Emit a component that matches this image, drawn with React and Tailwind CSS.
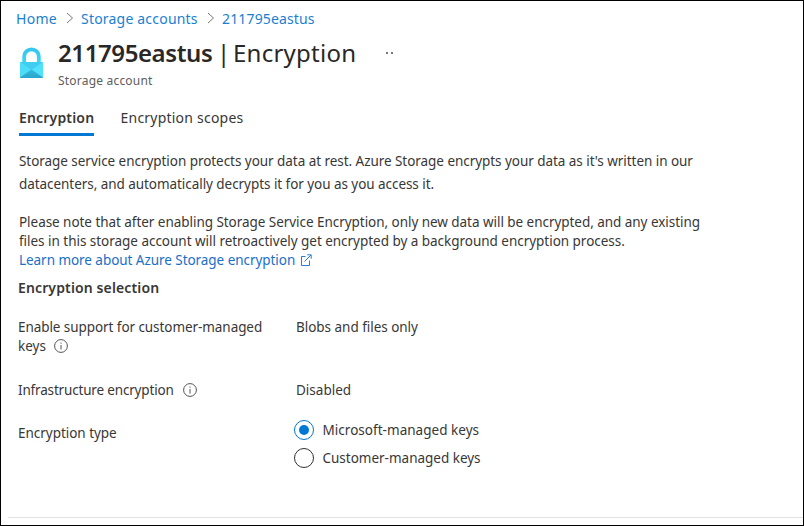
function Chevron() {
  return (
    <svg className="h-[12px] w-[8px] shrink-0" viewBox="0 0 8 12" fill="none" stroke="#777" strokeWidth="1">
      <path d="M1 1 L6.5 6 L1 11" />
    </svg>
  );
}

function InfoIcon() {
  return (
    <svg className="-mt-px h-[14px] w-[14px] shrink-0" viewBox="0 0 14 14" fill="none" stroke="#555" strokeWidth="1">
      <circle cx="7" cy="7" r="6.4" />
      <path d="M7 6 V10.5 M7 3.5 V4.7" />
    </svg>
  );
}

function LockIcon() {
  return (
    <svg className="h-[32px] w-[25px] shrink-0" viewBox="0 0 25 32">
      <defs>
        <linearGradient id="shackle" x1="0" y1="0" x2="0" y2="1">
          <stop offset="0" stopColor="#32c8ee" />
          <stop offset="1" stopColor="#3ed5fa" />
        </linearGradient>
        <linearGradient id="base" x1="0" y1="0" x2="0" y2="1">
          <stop offset="0" stopColor="#35b9dc" />
          <stop offset="1" stopColor="#2aa5cb" />
        </linearGradient>
      </defs>
      <path d="M5.2 16 V9.5 A7.3 7.2 0 0 1 19.8 9.5 V16" fill="none" stroke="url(#shackle)" strokeWidth="3.8" />
      <rect x="1" y="15" width="23" height="16" rx="0.8" fill="#50e2fc" />
      <path d="M1 15 H24 L12.5 23 Z" fill="#3fcdf0" />
      <path d="M1 15 L12.5 23 L1 31 Z" fill="#4adcf8" />
      <path d="M12.5 22.5 L24 30.5 Q24 31 23.3 31 H1.7 Q1 31 1 30.5 Z" fill="url(#base)" />
    </svg>
  );
}

function ExternalIcon() {
  return (
    <svg className="-mt-[2px] ml-[5px] h-[12px] w-[12px] shrink-0" viewBox="0 0 12 12" fill="none" stroke="#2b7bd6" strokeWidth="1">
      <path d="M5.5 2.5 H1.5 V11.5 H9.5 V6.5 M4.5 7.5 L11 1 M7.2 0.8 H11.2 V4.8" />
    </svg>
  );
}

function Radio({ checked, label, tracking }) {
  return (
    <div className="flex h-[20px] items-center">
      <span
        className={
          "flex h-[20px] w-[20px] items-center justify-center rounded-full border " +
          (checked ? "border-[#0078d4]" : "border-[#323130]")
        }
      >
        {checked && <span className="h-[10px] w-[10px] rounded-full bg-[#0078d4]" />}
      </span>
      <span className={"ml-[8.5px] leading-[20px] " + tracking}>{label}</span>
    </div>
  );
}

export default function App() {
  return (
    <div className="h-[526px] w-[804px] overflow-hidden whitespace-nowrap border border-black bg-white pt-[7px] font-['Noto_Sans',sans-serif] text-[13.5px] text-[#383736]">
      <nav className="flex h-[20px] items-center pl-[15px] text-[14px] text-[#1a7fd2]">
        <span className="w-[50px] tracking-[0.3px]">Home</span>
        <span className="flex w-[15px]"><Chevron /></span>
        <span className="w-[126px] tracking-[0.2px]">Storage accounts</span>
        <span className="flex w-[15px]"><Chevron /></span>
        <span className="tracking-[0.15px]">211795eastus</span>
      </nav>

      <header className="flex h-[68px] pl-[18px]">
        <div className="pt-[19px]"><LockIcon /></div>
        <div className="ml-[14px] pt-[8px]">
          <div className="flex h-[34px] items-center text-[24px] leading-[34px] text-[#292827]">
            <h1 className="w-[159px] font-semibold tracking-[-0.4px]">211795eastus</h1>
            <span className="w-[16px]">|</span>
            <span className="w-[153px] tracking-[0.25px]">Encryption</span>
            <span className="flex gap-[3px]">
              <i className="h-[2px] w-[2px] bg-[#777]" />
              <i className="h-[2px] w-[2px] bg-[#777]" />
            </span>
          </div>
          <div className="mt-[2px] h-[18px] text-[12px] leading-[18px] tracking-[0.2px] text-[#605e5c]">Storage account</div>
        </div>
      </header>

      <div className="mt-[12px] flex h-[28px] pl-[18px] text-[14px] leading-[20px]">
        <div className="w-[75px] border-b-3 border-[#0078d4] font-semibold tracking-[0.18px]">Encryption</div>
        <div className="ml-[26.5px] tracking-[0.22px]">Encryption scopes</div>
      </div>

      <div className="pl-[18px] pt-[14px]">
        <div className="leading-[23px]">
          <p className="tracking-[-0.048px]">Storage service encryption protects your data at rest. Azure Storage encrypts your data as it's written in our</p>
          <p className="tracking-[-0.055px]">datacenters, and automatically decrypts it for you as you access it.</p>
        </div>
        <div className="mt-[17px] leading-[19px]">
          <p className="tracking-[-0.045px]">Please note that after enabling Storage Service Encryption, only new data will be encrypted, and any existing</p>
          <p className="tracking-[-0.028px]">files in this storage account will retroactively get encrypted by a background encryption process.</p>
          <a className="flex items-center text-[#1a6fc9]">
            <span className="tracking-[-0.05px]">Learn more about Azure Storage encryption</span>
            <ExternalIcon />
          </a>
        </div>
      </div>

      <h2 className="mt-[8px] pl-[17px] text-[14px] font-semibold leading-[20px] tracking-[0.13px]">Encryption selection</h2>

      <div className="mt-[20px] grid grid-cols-[278px_1fr] pl-[17px] leading-[19px]">
        <div className="h-[63px]">
          <div className="tracking-[-0.07px]">Enable support for customer-managed</div>
          <div className="flex items-center">
            <span>keys</span>
            <span className="ml-[8.5px]"><InfoIcon /></span>
          </div>
        </div>
        <div className="tracking-[-0.03px]">Blobs and files only</div>
        <div className="flex h-[19px] items-center">
          <span className="tracking-[-0.17px]">Infrastructure encryption</span>
          <span className="ml-[9px]"><InfoIcon /></span>
        </div>
        <div>Disabled</div>
      </div>

      <div className="mt-[20px] flex pl-[17px]">
        <div className="w-[276px] pt-[4px] leading-[19px] tracking-[-0.03px]">Encryption type</div>
        <div className="flex flex-col gap-[8px]">
          <Radio checked label="Microsoft-managed keys" tracking="tracking-[0.03px]" />
          <Radio label="Customer-managed keys" tracking="tracking-[-0.01px]" />
        </div>
      </div>

      <div className="ml-[7px] mt-[49px] h-px bg-[#e1e1e1]" />
    </div>
  );
}
